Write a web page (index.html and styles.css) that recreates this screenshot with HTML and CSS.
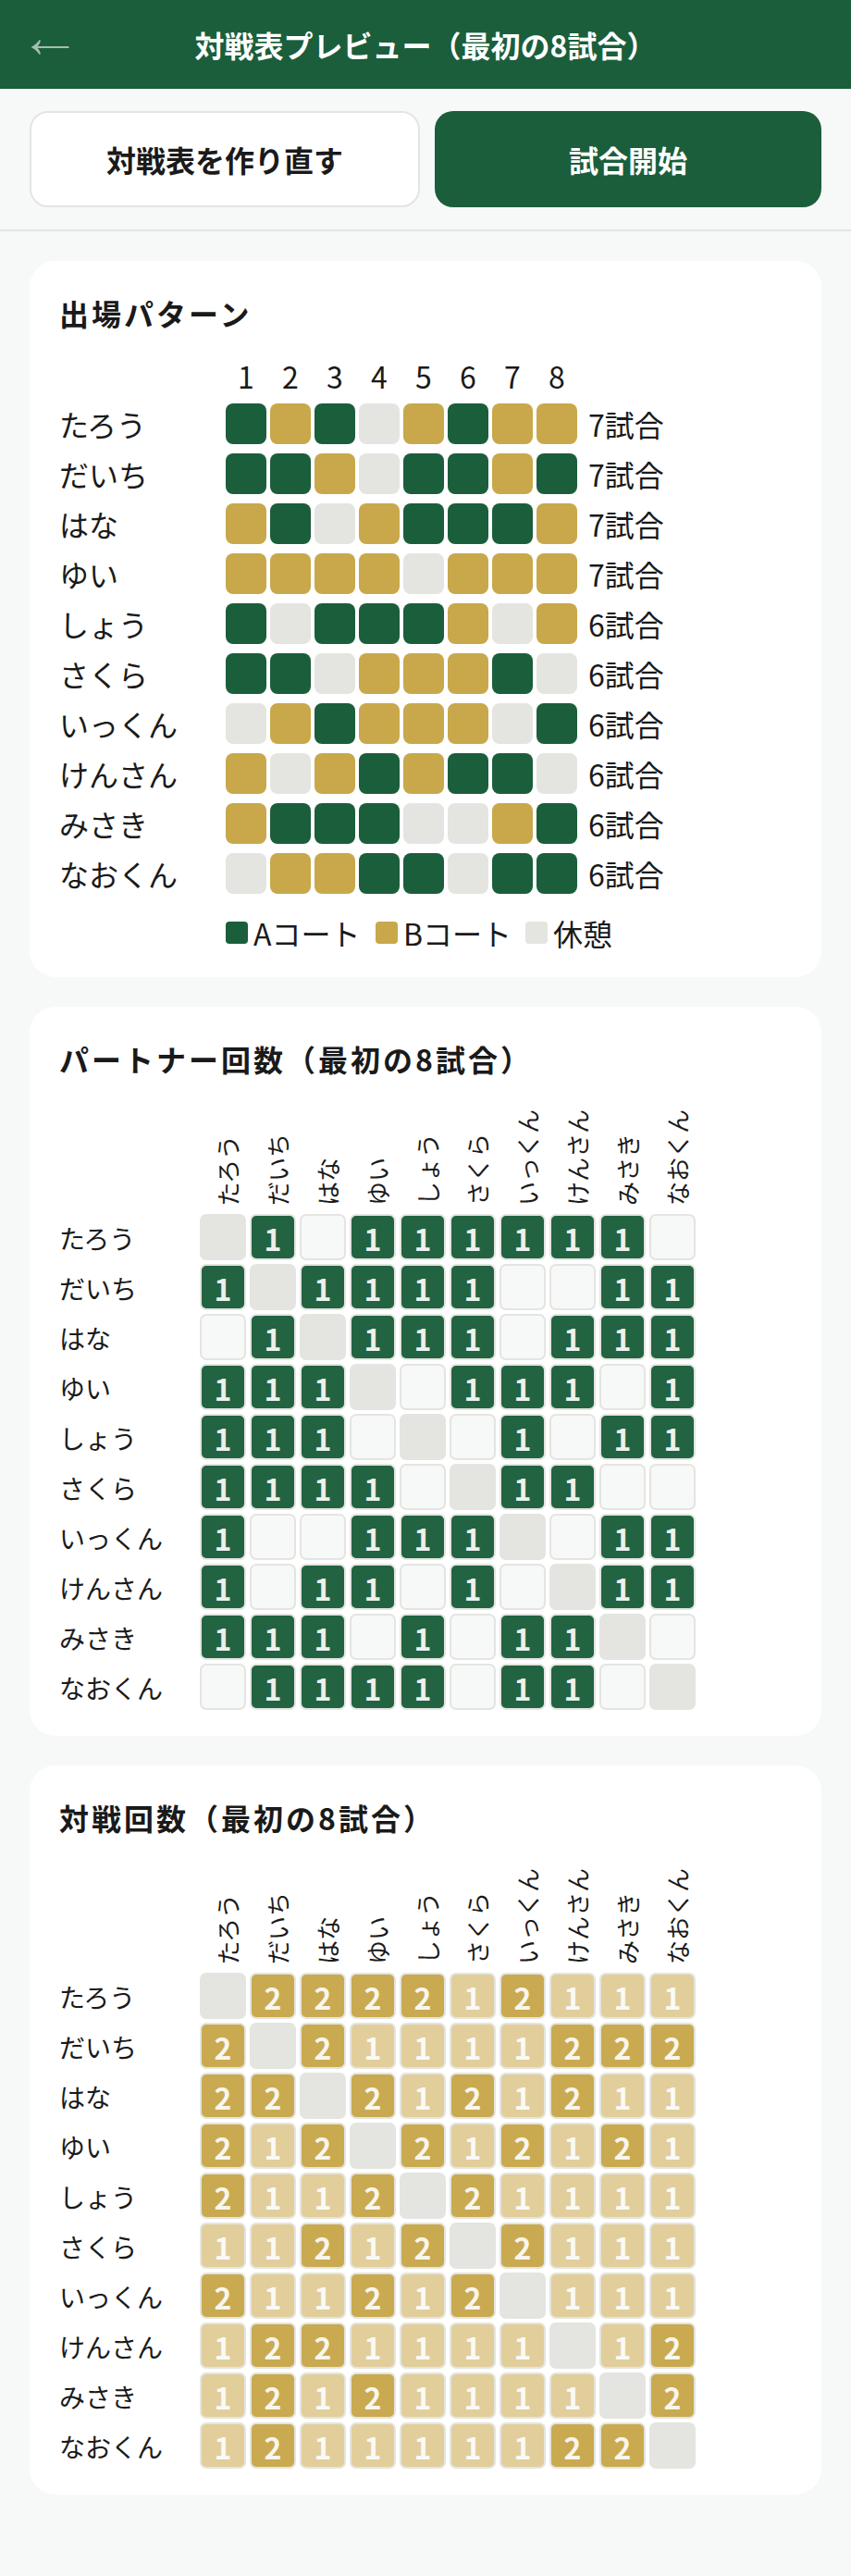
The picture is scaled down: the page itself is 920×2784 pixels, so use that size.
FILE: index.html
```html
<!DOCTYPE html>
<html lang="ja">
<head>
<meta charset="utf-8">
<title>対戦表プレビュー</title>
<link rel="stylesheet" href="styles.css">
</head>
<body>
<header class="topbar">
  <a class="back" aria-label="戻る"><svg width="44" height="20" viewBox="0 0 44 20"><path d="M5 9h37.500v2H5z"/><path d="M1.500 10Q8 6.500 10.500 2L12 3Q10.500 7.500 8 10Q10.500 12.500 12 17L10.500 18Q8 13.500 1.500 10z"/></svg></a>
  <h1 class="title">対戦表プレビュー（最初の8試合）</h1>
</header>
<div class="actions">
  <button class="btn btn-outline">対戦表を作り直す</button>
  <button class="btn btn-primary">試合開始</button>
</div>
<main class="content">
  <section class="card">
    <h2 class="heading">出場パターン</h2>
    <div id="pattern"></div>
    <div class="legend">
      <span class="legend-item"><i class="swatch a"></i>Aコート</span>
      <span class="legend-item"><i class="swatch b"></i>Bコート</span>
      <span class="legend-item"><i class="swatch rest"></i>休憩</span>
    </div>
  </section>
  <section class="card card-matrix">
    <h2 class="heading">パートナー回数（最初の8試合）</h2>
    <div class="partner" id="partner"></div>
  </section>
  <section class="card card-matrix">
    <h2 class="heading">対戦回数（最初の8試合）</h2>
    <div class="versus" id="versus"></div>
  </section>
</main>
<script src="script.js"></script>
</body>
</html>
```

FILE: styles.css
```css
* { box-sizing: border-box; }

body {
  margin: 0;
  min-height: 2784px;
  background: #f7f9f8;
  color: #1a1a1a;
  font-family: "Noto Sans CJK JP", sans-serif;
  font-size: 32px;
  line-height: 48px;
}

.topbar {
  display: grid;
  grid-template-columns: 64px 1fr 64px;
  align-items: center;
  height: 96px;
  padding: 0 32px;
  background: #1b5e3b;
  color: #fff;
}
.back { display: flex; padding-top: 6px; }
.back svg { fill: #fff; opacity: .6; }
.title { margin: 0; font-size: 32px; font-weight: 700; text-align: center; white-space: nowrap; }

.actions {
  display: flex;
  gap: 16px;
  padding: 24px 32px;
  border-bottom: 2px solid #e4e5e0;
}
.btn {
  flex: 1 1 0;
  height: 104px;
  padding: 0;
  border: 0;
  border-radius: 20px;
  font: inherit;
  font-weight: 700;
}
.btn-outline { background: #fff; color: #1a1a1a; border: 2px solid #e4e5e0; }
.btn-primary { background: #1b5e3b; color: #fff; }

.content { display: flex; flex-direction: column; gap: 32px; padding: 32px; }
.card { padding: 32px 32px 24px; background: #fff; border-radius: 28px; }
.card-matrix { padding-bottom: 26px; }
.heading { margin: 0; font-size: 32px; font-weight: 700; letter-spacing: 3px; }

.row { display: flex; align-items: center; height: 54px; }

.pattern-head { display: flex; gap: 4px; margin: 20px 0 1px; padding-left: 180px; }
.pattern-head span { width: 44px; text-align: center; }
.pattern-name { width: 180px; }
.slots { display: flex; gap: 4px; margin-right: 12px; }
.slot { width: 44px; height: 44px; border-radius: 8px; }
.a { background: #1b5e3b; }
.b { background: #c8a84b; }
.rest { background: #e4e5e0; }

.legend { display: flex; margin-top: 13px; padding-left: 180px; }
.legend-item { display: flex; align-items: center; gap: 6px; width: 162px; white-space: nowrap; }
.swatch { width: 24px; height: 24px; border-radius: 4px; }

.matrix-head { display: flex; gap: 4px; height: 142px; padding: 0 0 7px 152px; align-items: flex-end; }
.matrix-head span {
  width: 50px;
  padding-right: 10px;
  font-size: 26px;
  line-height: 40px;
  writing-mode: vertical-rl;
  text-orientation: sideways;
  transform: rotate(180deg);
}
.matrix-name { width: 152px; padding-top: 2px; font-size: 28px; }
.counts { display: flex; gap: 4px; }
.count {
  width: 50px;
  height: 50px;
  border: 2px solid #e4e5e0;
  border-radius: 7px;
  background: #f7f9f8;
  line-height: 48px;
  font-weight: 700;
  text-align: center;
}
.self { background: #e4e5e0; }
.partner .n1 { background: #226342; color: #ecf1ee; }
.versus .n1 { background: #e2ce9a; color: #f9faf8; }
.versus .n2 { background: #c9aa50; color: #f9f6ec; }
```

FILE: script.js
```js
const names = ["たろう", "だいち", "はな", "ゆい", "しょう", "さくら", "いっくん", "けんさん", "みさき", "なおくん"];

// A / B = court, "." = rest
const pattern = [
  "ABA.BABB", "AAB.AABA", "BA.BAAAB", "BBBB.BBB", "A.AAAB.B",
  "AA.BBBA.", ".BABBB.A", "B.BABAA.", "BAAA..BA", ".BBAA.AA"
];

// "x" = the player's own cell
const partner = [
  "x101111110", "1x11110011", "01x1110111", "111x011101", "1110x01011",
  "11110x1100", "100111x011", "1011010x11", "11101011x0", "011110110x"
];
const versus = [
  "x222212111", "2x21111222", "22x2121211", "212x212121", "2112x21111",
  "11212x2111", "211212x111", "1221111x12", "12121111x2", "121111122x"
];

const div = (cls, html) => `<div class="${cls}">${html}</div>`;

const slotClass = { A: "slot a", B: "slot b", ".": "slot rest" };
document.getElementById("pattern").innerHTML =
  div("pattern-head", [...pattern[0]].map((_, i) => `<span>${i + 1}</span>`).join("")) +
  pattern.map((line, i) => div("row",
    div("pattern-name", names[i]) +
    div("slots", [...line].map(c => div(slotClass[c], "")).join("")) +
    `<span>${line.replace(/\./g, "").length}試合</span>`
  )).join("");

function drawMatrix(id, data) {
  const cell = c => c === "x" ? div("count self", "") : c === "0" ? div("count", "") : div("count n" + c, c);
  document.getElementById(id).innerHTML =
    div("matrix-head", names.map(n => `<span>${n}</span>`).join("")) +
    data.map((line, i) => div("row",
      div("matrix-name", names[i]) + div("counts", [...line].map(cell).join(""))
    )).join("");
}
drawMatrix("partner", partner);
drawMatrix("versus", versus);
```
